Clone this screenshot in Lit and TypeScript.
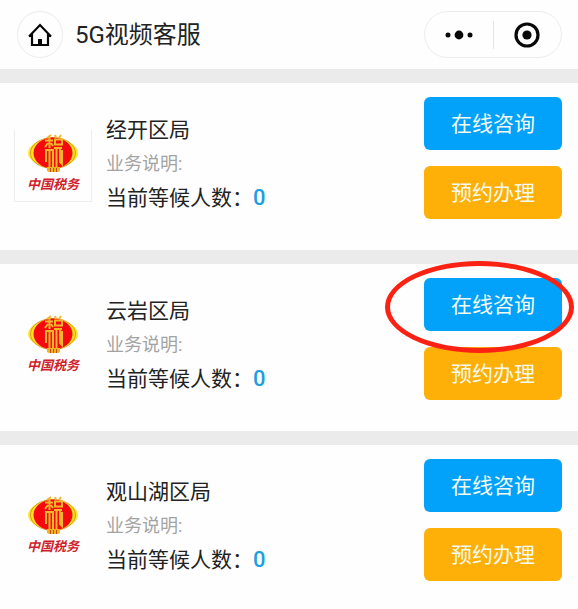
import { LitElement, html, svg, css, nothing } from "lit";
import { customElement, property } from "lit/decorators.js";

const emblem = svg`
  <ellipse cx="25" cy="19" rx="25" ry="14" fill="#fbe62a"/>
  <ellipse cx="25" cy="19" rx="22.500" ry="15.500" fill="#ffe21c" stroke="#cf8a1e" stroke-width="0.800"/>
  <ellipse cx="25" cy="19" rx="19.500" ry="15.500" fill="#f4090e"/>
  <path d="M19 33h13v4l-2 1h-9l-2-1z" fill="#f0b41e"/>
  <path d="M22.500 34v4M25.500 34v4M28.500 34v4" stroke="#b8321a" stroke-width="0.800"/>
  <g fill="none" stroke="#f2b62c" stroke-width="2">
    <path d="M23 1l-4 3M17 6.500h8M21.500 3v11M20 9l-3 4M23 9l2 3"/>
    <path d="M27 1l1 3M33 1l-2 3M27 5.500h7v5h-7zM26 14h8"/>
    <path d="M17 16h9M18 15v13M21.500 17v16M25 15v18M28.500 13v20M32 14v14l2 2v-5M34 16v9"/>
  </g>`;

@customElement("tax-logo")
export class TaxLogo extends LitElement {
  static styles = css`
    :host {
      display: flex;
      flex-direction: column;
      align-items: center;
    }
    .lantern {
      display: block;
      width: 50px;
      height: 39px;
    }
    .name {
      color: #cf1f2c;
      font-size: 13px;
      line-height: 24px;
      font-weight: 700;
      font-style: italic;
      white-space: nowrap;
    }
  `;
  render() {
    return html`
      <svg class="lantern" viewBox="0 0 50 39" aria-hidden="true">${emblem}</svg>
      <span class="name">中国税务</span>
    `;
  }
}

@customElement("office-card")
export class OfficeCard extends LitElement {
  @property() name = "";
  @property({ type: Number }) waiting = 0;
  @property({ type: Boolean }) framed = false;
  @property({ type: Boolean }) marked = false;

  static styles = css`
    :host {
      display: flex;
      align-items: flex-start;
      gap: 14px;
      padding: 14px 16px 31px 14px;
      border-top: 14px solid #ebebeb;
      background: #fefefe;
    }
    .logo {
      box-sizing: border-box;
      flex: none;
      width: 78px;
      margin-top: 33px;
      padding: 4px 0;
      border: 1px solid transparent;
      border-top: 0;
    }
    .logo.framed {
      border-color: #ededed;
    }
    .info {
      flex: 1;
      min-width: 0;
      padding-top: 16px;
    }
    h2,
    p {
      margin: 0;
      font-size: 21px;
      line-height: 34px;
      font-weight: 400;
      color: #222;
      white-space: nowrap;
    }
    .note {
      font-size: 18px;
      color: #a3a3a3;
    }
    .count {
      font-size: 22px;
      color: #1d9fe0;
      font-weight: 500;
    }
    .actions {
      flex: none;
      display: flex;
      flex-direction: column;
      gap: 16px;
      width: 138px;
    }
    .slot {
      position: relative;
      display: flex;
    }
    button {
      flex: 1;
      height: 53px;
      padding: 0;
      border: 0;
      border-radius: 6px;
      font: inherit;
      font-size: 21px;
      line-height: 32px;
      color: #f4fbf0;
      background: #02a2fb;
    }
    .booking {
      background: #ffb008;
    }
    .ring {
      position: absolute;
      z-index: 1;
      inset: -17px -12px -22px -39px;
      border: 5px solid #fb2214;
      border-radius: 50%;
      pointer-events: none;
    }
  `;
  render() {
    return html`
      <tax-logo class="logo ${this.framed ? "framed" : ""}"></tax-logo>
      <div class="info">
        <h2>${this.name}</h2>
        <p class="note">业务说明:</p>
        <p>当前等候人数：<span class="count">${this.waiting}</span></p>
      </div>
      <div class="actions">
        <div class="slot">
          <button type="button">在线咨询</button>
          ${this.marked ? html`<span class="ring"></span>` : nothing}
        </div>
        <div class="slot">
          <button class="booking" type="button">预约办理</button>
        </div>
      </div>
    `;
  }
}

@customElement("app-root")
export class AppRoot extends LitElement {
  static styles = css`
    :host {
      display: block;
      min-height: 100vh;
      overflow: hidden;
      background: #fcfcfc;
      font-family: Roboto, "Noto Sans CJK SC", sans-serif;
    }
    header {
      display: flex;
      align-items: center;
      gap: 12px;
      padding: 11px 16px 11px 17px;
      background: #fefefe;
    }
    h1 {
      flex: 1;
      margin: 0;
      font-size: 24px;
      line-height: 36px;
      font-weight: 400;
      color: #222;
      white-space: nowrap;
    }
    button {
      display: flex;
      align-items: center;
      justify-content: center;
      padding: 0;
      border: 0;
      background: none;
      color: #080808;
    }
    .home {
      box-sizing: border-box;
      width: 46px;
      height: 47px;
      border: 1px solid #ececec;
      border-radius: 50%;
    }
    .capsule {
      box-sizing: border-box;
      display: flex;
      align-items: center;
      width: 138px;
      height: 47px;
      border: 1px solid #ececec;
      border-radius: 24px;
    }
    .capsule button {
      flex: 1;
      height: 28px;
    }
    .capsule button + button {
      border-left: 1px solid #e6e6e6;
    }
    svg {
      display: block;
    }
  `;
  render() {
    return html`
      <header>
        <button class="home" type="button" aria-label="首页">
          <svg width="26" height="24" viewBox="0 0 26 24" fill="none" stroke="currentColor" stroke-width="2.200">
            <path d="M2 13.500L13 2l11 11.500M5 11v11h16V11M2 13h4M20 13h4"/>
            <path d="M11 22v-6h4v6z" fill="currentColor" stroke="none"/>
          </svg>
        </button>
        <h1>5G视频客服</h1>
        <div class="capsule">
          <button type="button" aria-label="更多">
            <svg width="28" height="10" viewBox="0 0 28 10" fill="currentColor">
              <circle cx="3" cy="5" r="2.500"/>
              <circle cx="14" cy="5" r="4.400"/>
              <circle cx="25" cy="5" r="2.500"/>
            </svg>
          </button>
          <button type="button" aria-label="关闭">
            <svg width="26" height="26" viewBox="0 0 26 26">
              <circle cx="13" cy="13" r="11" fill="none" stroke="currentColor" stroke-width="3.200"/>
              <circle cx="13" cy="13" r="4.600" fill="currentColor"/>
            </svg>
          </button>
        </div>
      </header>
      <main>
        <office-card name="经开区局" framed></office-card>
        <office-card name="云岩区局" marked></office-card>
        <office-card name="观山湖区局"></office-card>
      </main>
    `;
  }
}
